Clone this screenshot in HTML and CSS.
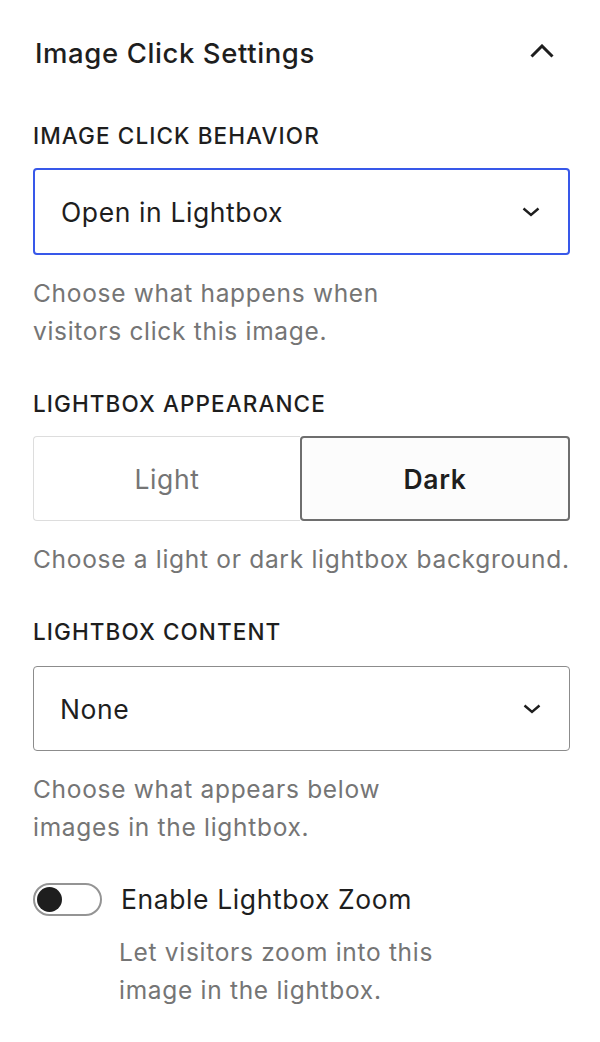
FILE: index.html
```html
<!DOCTYPE html>
<html lang="en">
<head>
	<meta charset="UTF-8">
	<title>Image Click Settings</title>
	<link rel="stylesheet" href="styles.css">
</head>
<body>
	<div class="panel">
		<div class="panel_head">
			<h2 class="panel_head_title">Image Click Settings</h2>
			<svg class="panel_head_icon" width="24" height="14" viewBox="0 0 24 14">
				<path d="M1.5 12.5 L12 2 L22.5 12.5" fill="none" stroke="#1e1e1e" stroke-width="3"/>
			</svg>
		</div>

		<div class="field field_first">
			<div class="field_label">Image click behavior</div>
			<div class="select select_focus">
				<span>Open in Lightbox</span>
				<svg class="select_icon" width="18" height="10" viewBox="0 0 18 10">
					<path d="M1.5 1.5 L9 8 L16.5 1.5" fill="none" stroke="#1e1e1e" stroke-width="2.4"/>
				</svg>
			</div>
			<div class="field_help">Choose what happens when<br>visitors click this image.</div>
		</div>

		<div class="field">
			<div class="field_label">Lightbox appearance</div>
			<div class="segment">
				<a href="javascript:;" class="segment_item">Light</a>
				<a href="javascript:;" class="segment_item current">Dark</a>
			</div>
			<div class="field_help">Choose a light or dark lightbox background.</div>
		</div>

		<div class="field">
			<div class="field_label field_label_wide">Lightbox content</div>
			<div class="select">
				<span>None</span>
				<svg class="select_icon" width="18" height="10" viewBox="0 0 18 10">
					<path d="M1.5 1.5 L9 8 L16.5 1.5" fill="none" stroke="#1e1e1e" stroke-width="2.4"/>
				</svg>
			</div>
			<div class="field_help">Choose what appears below<br>images in the lightbox.</div>
		</div>

		<div class="field field_toggle">
			<div class="toggle_row">
				<span class="toggle"><span class="toggle_knob"></span></span>
				<span class="toggle_label">Enable Lightbox Zoom</span>
			</div>
			<div class="field_help toggle_help">Let visitors zoom into this<br>image in the lightbox.</div>
		</div>
	</div>
</body>
</html>
```

FILE: styles.css
```css
body {
	margin: 0;
	padding: 0;
	background: #fff;
	color: #1e1e1e;
	font-family: Inter, "Noto Sans", sans-serif;
}

.panel { padding: 0 30px 0 33px; }

.panel_head {
	height: 106px;
	display: flex;
	align-items: center;
	justify-content: space-between;
}

.panel_head_title {
	margin: 0 0 0 2px;
	font-size: 27.5px;
	letter-spacing: 0.6px;
	font-weight: 500;
	line-height: 32px;
}

.panel_head_icon { margin-right: 16px; margin-bottom: 4px; }

.field { margin-top: 38px; }
.field_first { margin-top: 14px; }

.field_label {
	font-size: 22.5px;
	letter-spacing: 1.1px;
	line-height: 32px;
	font-weight: 500;
	text-transform: uppercase;
	margin-bottom: 16px;
}

.field_label_wide { margin-bottom: 18px; }

.field_help {
	margin-top: 19px;
	font-size: 24.5px;
	letter-spacing: 0.7px;
	line-height: 38px;
	color: #757575;
}

.select {
	height: 85px;
	box-sizing: border-box;
	border: 1.5px solid #8c8c8c;
	border-radius: 4px;
	display: flex;
	align-items: center;
	justify-content: space-between;
	padding: 0 28px 0 26px;
	font-size: 26.5px;
	letter-spacing: 0.6px;
}

.select_focus { height: 87px; border: 2px solid #3858e9; }

.segment {
	height: 85px;
	display: flex;
}

.segment_item {
	flex: 1;
	display: flex;
	align-items: center;
	justify-content: center;
	text-decoration: none;
	font-size: 26.5px;
	letter-spacing: 0.6px;
	color: #757575;
	border: 1.5px solid #ddd;
	border-right: none;
	border-radius: 4px 0 0 4px;
}

.segment_item.current {
	color: #1e1e1e;
	font-weight: 600;
	background: #fcfcfc;
	border: 2px solid #6e6e6e;
	border-radius: 4px;
}

.field_toggle { margin-top: 36px; }

.toggle_row {
	display: flex;
	align-items: center;
	gap: 19px;
}

.toggle {
	width: 69px;
	height: 33px;
	box-sizing: border-box;
	border: 2px solid #949494;
	border-radius: 17px;
	display: flex;
	align-items: center;
	padding-left: 2px;
}

.toggle_knob {
	width: 25px;
	height: 25px;
	border-radius: 13px;
	background: #1e1e1e;
}

.toggle_label { font-size: 26.5px; letter-spacing: 0.6px; line-height: 34px; }

.toggle_help { margin-top: 17px; padding-left: 86px; }
```
